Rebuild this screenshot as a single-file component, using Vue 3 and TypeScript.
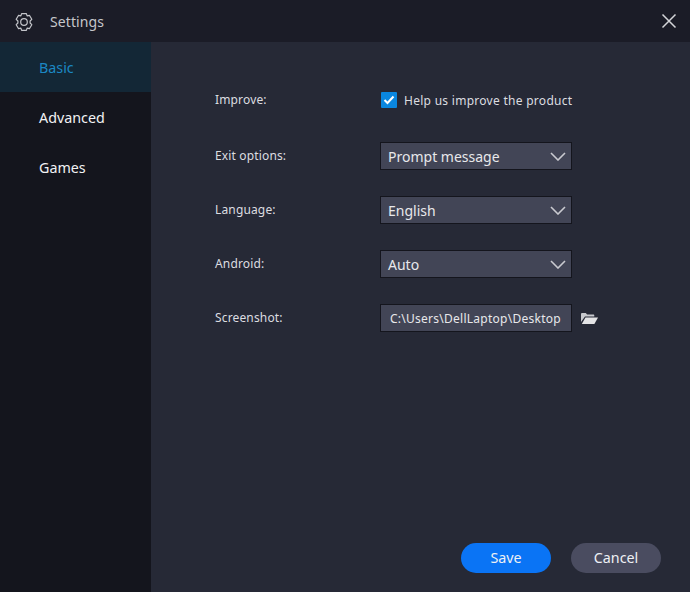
<script setup lang="ts">
interface Row {
  label: string
  value: string
}
const selects: Row[] = [
  { label: 'Exit options:', value: 'Prompt message' },
  { label: 'Language:', value: 'English' },
  { label: 'Android:', value: 'Auto' },
]
const nav: string[] = ['Basic', 'Advanced', 'Games']
</script>

<template>
  <div class="window">
    <header class="titlebar">
      <svg class="gear" width="20" height="20" viewBox="0 0 20 20" fill="none" stroke="#c4c5ca" stroke-width="1.2" stroke-linejoin="round">
        <path d="M7.6 1.6h4.8l.7 2.3 2.3-.6 2.4 4-1.7 1.7v2l1.7 1.7-2.4 4-2.3-.6-.7 2.3H7.6l-.7-2.3-2.3.6-2.4-4L3.900 11V9L2.200 7.300l2.400-4 2.300.6z" />
        <circle cx="10" cy="10" r="3.300" />
      </svg>
      <span class="title">Settings</span>
      <svg class="close" width="16" height="16" viewBox="0 0 16 16" stroke="#d4d5d9" stroke-width="1.500" fill="none">
        <path d="M1.500 1.500l13 13M14.500 1.500l-13 13" />
      </svg>
    </header>
    <div class="body">
      <nav class="sidebar">
        <div v-for="(item, i) in nav" :key="item" class="nav-item" :class="{ active: i === 0 }">{{ item }}</div>
      </nav>
      <main class="content">
        <div class="form">
          <div class="row first">
            <span class="label">Improve:</span>
            <label class="check">
              <span class="box">
                <svg width="12" height="10" viewBox="0 0 12 10" fill="none" stroke="#fff" stroke-width="2">
                  <path d="M1.500 5l3 3 6-6.500" />
                </svg>
              </span>
              <span>Help us improve the product</span>
            </label>
          </div>
          <div v-for="row in selects" :key="row.label" class="row">
            <span class="label">{{ row.label }}</span>
            <div class="control select">
              <span>{{ row.value }}</span>
              <svg width="16" height="9" viewBox="0 0 16 9" fill="none" stroke="#c9cad0" stroke-width="1.600">
                <path d="M1 1l7 7 7-7" />
              </svg>
            </div>
          </div>
          <div class="row">
            <span class="label">Screenshot:</span>
            <div class="control path">C:\Users\DellLaptop\Desktop</div>
            <svg class="folder" width="17" height="13" viewBox="0 0 17 13">
              <path fill="#c8c9ce" d="M0 2.200C0 1.500.5 1 1.200 1h3.600l1.300 1.500h6.200c.6 0 1 .4 1 1V4.500H4L0 10z" />
              <path fill="#e4e4e6" d="M4.500 5.500H17L13.400 12H.800z" />
            </svg>
          </div>
        </div>
        <div class="actions">
          <button class="btn save" type="button">Save</button>
          <button class="btn cancel" type="button">Cancel</button>
        </div>
      </main>
    </div>
  </div>
</template>

<style>
html, body { margin: 0; background: #262936; }
</style>

<style scoped>
.window {
  width: 690px;
  height: 592px;
  display: flex;
  flex-direction: column;
  font-family: "Noto Sans", "Open Sans", sans-serif;
  color: #e6e6e9;
  overflow: hidden;
}
.titlebar {
  height: 42px;
  flex: none;
  display: flex;
  align-items: center;
  padding: 0 13px 0 14px;
  background: #1b1c27;
}
.gear { flex: none; margin-top: 2px; }
.title {
  margin-left: 16px;
  font-size: 14px;
  letter-spacing: 0.100px;
  color: #c6c7cb;
}
.close { margin-left: auto; }
.body { flex: 1; display: flex; min-height: 0; }
.sidebar {
  width: 151px;
  flex: none;
  background: #14151d;
}
.nav-item {
  height: 50px;
  line-height: 52px;
  padding-left: 39px;
  font-size: 14.300px;
  color: #f2f2f4;
}
.nav-item.active {
  background: #132736;
  color: #1b88c4;
}
.content {
  flex: 1;
  position: relative;
  display: flex;
  flex-direction: column;
  justify-content: space-between;
  background: #262936;
}
.form {
  padding: 46px 0 0 64px;
  display: flex;
  flex-direction: column;
  gap: 26px;
}
.row {
  display: flex;
  align-items: center;
  height: 28px;
}
.row.first { height: 24px; margin-bottom: 4px; }
.label {
  width: 165px;
  flex: none;
  padding-bottom: 2px;
  font-size: 12px;
  letter-spacing: 0.150px;
  color: #dcdde0;
}
.check {
  display: flex;
  align-items: center;
  gap: 7px;
  margin-left: 1px;
  font-size: 12px;
  letter-spacing: 0.280px;
  color: #dcdde0;
}
.box {
  width: 16px;
  height: 16px;
  display: flex;
  align-items: center;
  justify-content: center;
  background: #0a87e0;
  border-radius: 1px;
}
.control {
  width: 190px;
  height: 26px;
  flex: none;
  display: flex;
  align-items: center;
  background: #424556;
  border: 1px solid #14151d;
  color: #e8e8eb;
}
.select {
  justify-content: space-between;
  padding: 0 5px 0 7px;
  width: 178px;
  font-size: 14px;
}
.path {
  padding-left: 9px;
  width: 181px;
  font-size: 12px;
  letter-spacing: 0.260px;
  white-space: nowrap;
}
.folder { margin-left: 9px; }
.actions {
  display: flex;
  justify-content: flex-end;
  gap: 20px;
  padding: 0 29px 19px 0;
}
.btn {
  width: 90px;
  height: 30px;
  border: none;
  border-radius: 15px;
  padding: 0 0 2px;
  font-family: inherit;
  font-size: 14.300px;
  color: #eef0f4;
}
.save { background: #0a74f5; }
.cancel { background: #4a4c60; }
</style>
